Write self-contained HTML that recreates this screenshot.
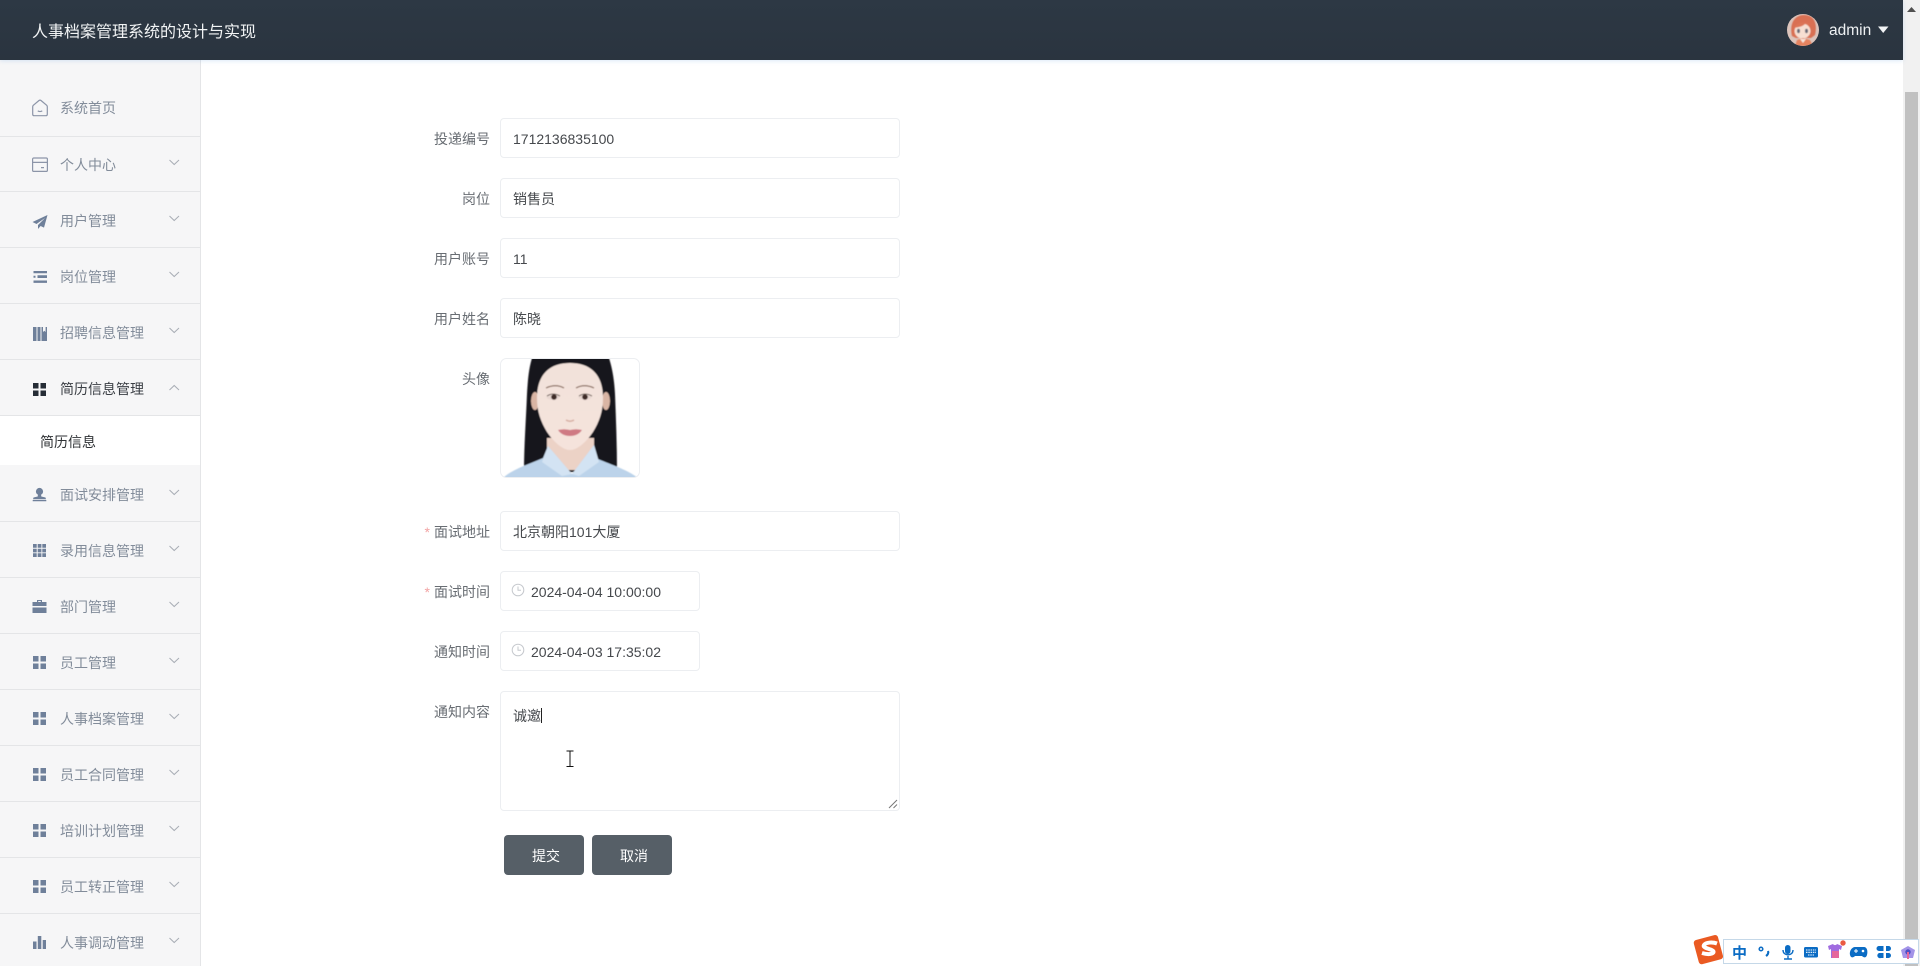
<!DOCTYPE html>
<html lang="zh-CN"><head><meta charset="utf-8"><title>人事档案管理系统的设计与实现</title>
<style>
*{box-sizing:border-box}
html,body{margin:0;width:1920px;height:966px;overflow:hidden;background:#fff;font-family:"Liberation Sans","Noto Sans CJK SC",sans-serif;font-size:14px}
.hd{position:absolute;left:0;top:0;width:1903px;height:60px;background:linear-gradient(#2d3844,#2a343f);box-shadow:0 1px 4px rgba(120,170,230,.25);z-index:3}
.title{position:absolute;left:32px;top:21px;font-size:16px;line-height:24px;color:#f2f4f5}
.admin{position:absolute;left:1829px;top:20px;font-size:15.5px;line-height:22px;color:#eef1f3}
.side{position:absolute;left:0;top:60px;width:201px;height:906px;background:#f6f6f7;border-right:1px solid #e4e5e7}
.it{position:absolute;left:0;width:200px;height:56px;border-bottom:1px solid #e4e5e7;color:#828c9a}
.it span{position:absolute;left:60px;top:18px;line-height:22px;white-space:nowrap}
.it svg.i{position:absolute;left:32px;top:18px}
.it svg.c{position:absolute;left:169px;top:23px}
.sub{position:absolute;left:0;top:415px;width:200px;height:50px;background:#fff;border-top:1px solid #e4e5e7;color:#2f3235}
.sub span{position:absolute;left:40px;top:15px;line-height:22px}
.lb{position:absolute;width:120px;left:370px;text-align:right;color:#686d73;line-height:22px;white-space:nowrap}
.lb b{color:#f2a3a3;font-weight:400;margin-right:4px}
.in{position:absolute;left:500px;width:400px;height:40px;border:1px solid #eceef1;border-radius:4px;background:#fff;color:#45484c;line-height:40px;padding-left:12px;white-space:nowrap}
.dt{width:200px;padding-left:30px}
.dt svg{position:absolute;left:10px;top:11px}
.ta{height:120px;line-height:22px;padding-top:13px}
.btn{position:absolute;top:835px;width:80px;height:40px;border-radius:4px;background:#565f67;color:#fff;text-align:center;line-height:42px;padding-left:4px}
.sb{position:absolute;left:1903px;top:0;width:17px;height:966px;background:#f1f1f1}
.th{position:absolute;left:2px;top:92px;width:13px;height:874px;background:#c1c1c1}
.ime{position:absolute;left:1723px;top:939px;width:196px;height:25px;background:#fff;border:1px solid #c5d8e8}
</style></head><body>
<div class="hd"><div class="title">人事档案管理系统的设计与实现</div>
<svg style="position:absolute;left:1787px;top:14px" width="32" height="32" viewBox="0 0 32 32"><defs><clipPath id="a"><circle cx="16" cy="16" r="16"/></clipPath><filter id="av"><feGaussianBlur stdDeviation=".45"/></filter></defs><g clip-path="url(#a)"><rect width="32" height="32" fill="#dcc4bc"/><g filter="url(#av)"><path d="M5 22C2 9 8 1 17 1s14 7 11 20l-4 3H9z" fill="#d96f52"/><ellipse cx="15.500" cy="17" rx="8" ry="7.500" fill="#f7dfd2"/><path d="M7 14c2-6 12-8 17-3-3-1-4 0-6-1-3 3-7 3-11 4z" fill="#dc7557"/><ellipse cx="11.500" cy="17" rx="1.500" ry="2.200" fill="#6a6a78"/><ellipse cx="19.500" cy="17" rx="1.500" ry="2.200" fill="#6a6a78"/><path d="M10 26l6-2 7 2 3 6H8z" fill="#e5835f"/><path d="M13 25l3 4 3-4z" fill="#f7e6dc"/></g></g></svg>
<div class="admin">admin</div>
<svg style="position:absolute;left:1878px;top:26px" width="11" height="8"><path d="M0 .5h10.500L5.200 7z" fill="#f2f4f6"/></svg></div>

<div class="side"></div>
<div class="it" style="top:81px"><svg class="i" width="16" height="18" viewBox="0 0 16 18" fill="none" stroke="#8c95a8" stroke-width="1.200"><path d="M7 1.500 1.300 6.300C.9 6.700.7 7.200.7 7.800v7.400c0 .9.700 1.500 1.500 1.500h11.600c.8 0 1.500-.6 1.500-1.500V7.800c0-.6-.2-1.100-.6-1.500L9 1.500c-.6-.5-1.400-.5-2 0z"/><path d="M5.800 11.800c.8 1 3.600 1 4.400 0"/></svg><span style="top:16px">系统首页</span></div>
<div class="it" style="top:136px"><svg class="i" width="16" height="16" viewBox="0 0 16 16" fill="none" stroke="#8c95a8" stroke-width="1.200" style="top:21px"><rect x=".6" y="1" width="14.800" height="13.400" rx="1.200"/><path d="M.6 5.400h14.800M9 10.600h3"/></svg><span>个人中心</span><svg class="c" width="11" height="7"><path d="M.5 1 5.200 5.500 10 1" fill="none" stroke="#a8adb5"/></svg></div>
<div class="it" style="top:192px"><svg class="i" width="16" height="16" viewBox="0 0 16 16" style="top:22px"><path d="M15.500 1 .5 8l4 2L13 4 6 11v4l2.600-3 3.400 1.600z" fill="#6f809a"/></svg><span>用户管理</span><svg class="c" width="11" height="7"><path d="M.5 1 5.200 5.500 10 1" fill="none" stroke="#a8adb5"/></svg></div>
<div class="it" style="top:248px"><svg class="i" width="16" height="14" viewBox="0 0 16 14" style="top:23px"><path d="M1.500 0h13.500v2.200H1.500zM1.500 4.800h2v2h-2zM5.500 4.300H15v2.700H5.500zM1.500 9.500h13.500v2.400H1.500z" fill="#6f809a"/></svg><span>岗位管理</span><svg class="c" width="11" height="7"><path d="M.5 1 5.200 5.500 10 1" fill="none" stroke="#a8adb5"/></svg></div>
<div class="it" style="top:304px"><svg class="i" width="16" height="16" viewBox="0 0 16 16" style="top:22px"><path d="M1 1h3.500v14H1zM5.500 1H8.500v14h-3zM9.500 1h1.500v5l1.300-1.300L13.600 6V1H15v14H9.500z" fill="#6f809a"/></svg><span>招聘信息管理</span><svg class="c" width="11" height="7"><path d="M.5 1 5.200 5.500 10 1" fill="none" stroke="#a8adb5"/></svg></div>
<div class="it" style="top:360px"><svg class="i" width="15" height="15" style="top:22px"><path d="M1 1h5.500v5.500H1zM8.500 1H14v5.500H8.500zM1 8.500h5.500V14H1zM8.500 8.500H14V14H8.500z" fill="#252c35"/></svg><span style="color:#3a3e44">简历信息管理</span><svg class="c" style="top:24px" width="11" height="7"><path d="M.5 6 5.200 1.500 10 6" fill="none" stroke="#a8adb5"/></svg></div>
<div class="sub"><span>简历信息</span></div>
<div class="it" style="top:466px"><svg class="i" width="15" height="15" style="top:21px"><circle cx="7.500" cy="4.500" r="3.600" fill="#6f809a"/><path d="M6 7h3l.3 2.500L13.500 10.500l.5 1.800H1l.5-1.800 4.200-1zM.7 13h13.600v1.300H.7z" fill="#6f809a"/></svg><span>面试安排管理</span><svg class="c" width="11" height="7"><path d="M.5 1 5.200 5.500 10 1" fill="none" stroke="#a8adb5"/></svg></div>
<div class="it" style="top:522px"><svg class="i" width="15" height="15" style="top:21px"><path d="M1 1h3.700v3.700H1zM5.700 1h3.700v3.700H5.700zM10.300 1H14v3.700h-3.700zM1 5.700h3.700v3.700H1zM5.700 5.700h3.700v3.700H5.700zM10.300 5.700H14v3.700h-3.700zM1 10.300h3.700V14H1zM5.700 10.300h3.700V14H5.700zM10.300 10.300H14V14h-3.700z" fill="#6f809a"/></svg><span>录用信息管理</span><svg class="c" width="11" height="7"><path d="M.5 1 5.200 5.500 10 1" fill="none" stroke="#a8adb5"/></svg></div>
<div class="it" style="top:578px"><svg class="i" width="15" height="15" style="top:21px"><path d="M5 3V1h5v2h4.500v4H.5V3zM6.200 3h2.600V2H6.200zM.5 8.500h14V14H.5z" fill="#6f809a"/></svg><span>部门管理</span><svg class="c" width="11" height="7"><path d="M.5 1 5.200 5.500 10 1" fill="none" stroke="#a8adb5"/></svg></div>
<div class="it" style="top:634px"><svg class="i" width="15" height="15" style="top:21px"><path d="M1 1h5.500v5.500H1zM8.500 1H14v5.500H8.500zM1 8.500h5.500V14H1zM8.500 8.500H14V14H8.500z" fill="#6f809a"/></svg><span>员工管理</span><svg class="c" width="11" height="7"><path d="M.5 1 5.200 5.500 10 1" fill="none" stroke="#a8adb5"/></svg></div>
<div class="it" style="top:690px"><svg class="i" width="15" height="15" style="top:21px"><path d="M1 1h5.500v5.500H1zM8.500 1H14v5.500H8.500zM1 8.500h5.500V14H1zM8.500 8.500H14V14H8.500z" fill="#6f809a"/></svg><span>人事档案管理</span><svg class="c" width="11" height="7"><path d="M.5 1 5.200 5.500 10 1" fill="none" stroke="#a8adb5"/></svg></div>
<div class="it" style="top:746px"><svg class="i" width="15" height="15" style="top:21px"><path d="M1 1h5.500v5.500H1zM8.500 1H14v5.500H8.500zM1 8.500h5.500V14H1zM8.500 8.500H14V14H8.500z" fill="#6f809a"/></svg><span>员工合同管理</span><svg class="c" width="11" height="7"><path d="M.5 1 5.200 5.500 10 1" fill="none" stroke="#a8adb5"/></svg></div>
<div class="it" style="top:802px"><svg class="i" width="15" height="15" style="top:21px"><path d="M1 1h5.500v5.500H1zM8.500 1H14v5.500H8.500zM1 8.500h5.500V14H1zM8.500 8.500H14V14H8.500z" fill="#6f809a"/></svg><span>培训计划管理</span><svg class="c" width="11" height="7"><path d="M.5 1 5.200 5.500 10 1" fill="none" stroke="#a8adb5"/></svg></div>
<div class="it" style="top:858px"><svg class="i" width="15" height="15" style="top:21px"><path d="M1 1h5.500v5.500H1zM8.500 1H14v5.500H8.500zM1 8.500h5.500V14H1zM8.500 8.500H14V14H8.500z" fill="#6f809a"/></svg><span>员工转正管理</span><svg class="c" width="11" height="7"><path d="M.5 1 5.200 5.500 10 1" fill="none" stroke="#a8adb5"/></svg></div>
<div class="it" style="top:914px;border:0"><svg class="i" width="15" height="15" style="top:21px"><path d="M1 6.500h3.500V14H1zM5.800 1h3.500v13H5.800zM10.700 5H14v9h-3.300z" fill="#6f809a"/></svg><span>人事调动管理</span><svg class="c" width="11" height="7"><path d="M.5 1 5.200 5.500 10 1" fill="none" stroke="#a8adb5"/></svg></div>

<div class="lb" style="top:128px">投递编号</div><div class="in" style="top:118px">1712136835100</div>
<div class="lb" style="top:188px">岗位</div><div class="in" style="top:178px">销售员</div>
<div class="lb" style="top:248px">用户账号</div><div class="in" style="top:238px">11</div>
<div class="lb" style="top:308px">用户姓名</div><div class="in" style="top:298px">陈晓</div>
<div class="lb" style="top:368px">头像</div>
<svg style="position:absolute;left:500px;top:358px" width="140" height="120" viewBox="0 0 140 120">
<defs><filter id="b" x="-5%" y="-5%" width="110%" height="110%"><feGaussianBlur stdDeviation=".9"/></filter><filter id="b2"><feGaussianBlur stdDeviation=".5"/></filter><clipPath id="r"><rect x=".5" y=".5" width="139" height="119" rx="6"/></clipPath><linearGradient id="sk" x1="0" y1="0" x2="0" y2="1"><stop offset="0" stop-color="#f2e2da"/><stop offset="1" stop-color="#f5e3dc"/></linearGradient></defs>
<g clip-path="url(#r)"><rect width="140" height="120" fill="#fff"/><g filter="url(#b2)">
<path d="M33 -3h75c4 12 6 22 7 39 1 26 2 52 2 78H24c0-26 2-52 3-78 1-17 2-27 6-39z" fill="#17141a"/>
<path d="M47 80h47v32H47z" fill="#ecd2c6"/>
<ellipse cx="35" cy="43" rx="4" ry="9" fill="#d9b5a4"/><ellipse cx="106" cy="43" rx="4" ry="9" fill="#d9b5a4"/>
<path d="M70 5c22 0 33 13 33 35 0 14-4 24-10 34-6 9-15 18-23 18s-17-9-23-18c-6-10-10-20-10-34C37 18 48 5 70 5z" fill="url(#sk)"/>
<path d="M46 30c6-3 13-3 18 0M76 30c5-3 12-3 18 0" stroke="#8a6d60" stroke-width="1.200" fill="none"/>
<ellipse cx="53" cy="39" rx="6.500" ry="2.800" fill="#e8d8d2"/><ellipse cx="85" cy="39" rx="6.500" ry="2.800" fill="#e8d8d2"/>
<circle cx="54" cy="39" r="2.800" fill="#3c2a25"/><circle cx="85" cy="39" r="2.800" fill="#3c2a25"/>
<path d="M47 38q6-4 13 0M79 38q6-4 13 0" stroke="#4b3a33" stroke-width=".8" fill="none"/>
<path d="M66 62q4 2.500 8 0" stroke="#d6ada0" stroke-width="1.500" fill="none"/>
<path d="M58 72q6-1.500 12 0 6-1.500 12 0-4 6-12 6t-12-6z" fill="#cf7a83"/>
<path d="M3 120c8-8 26-14 40-20l5-12 24 28 22-29 4 14c14 6 30 11 40 19z" fill="#bcd3ea"/>
<path d="M48 88 42 104l20 14 10-2zM94 87l5 17-20 14-7-2z" fill="#d3e3f3"/></g></g>
<rect x=".5" y=".5" width="139" height="119" rx="6" fill="none" stroke="#eceef1"/></svg>
<div class="lb" style="top:521px"><b>*</b>面试地址</div><div class="in" style="top:511px">北京朝阳101大厦</div>
<div class="lb" style="top:581px"><b>*</b>面试时间</div><div class="in dt" style="top:571px"><svg width="14" height="14" fill="none" stroke="#c6c9ce"><circle cx="7" cy="7" r="5.800"/><path d="M7 3.500V7.300h3"/></svg>2024-04-04 10:00:00</div>
<div class="lb" style="top:641px">通知时间</div><div class="in dt" style="top:631px"><svg width="14" height="14" fill="none" stroke="#c6c9ce"><circle cx="7" cy="7" r="5.800"/><path d="M7 3.500V7.300h3"/></svg>2024-04-03 17:35:02</div>
<div class="lb" style="top:701px">通知内容</div>
<div class="in ta" style="top:691px">诚邀<span style="display:inline-block;width:1px;height:15px;background:#222;vertical-align:-2px"></span>
<svg style="position:absolute;left:auto;right:1px;top:auto;bottom:1px" width="10" height="10" fill="none" stroke="#777"><path d="M1 9 9 1M5.500 9 9 5.500"/></svg></div>
<svg style="position:absolute;left:566px;top:750px" width="8" height="18" fill="none" stroke="#111"><path d="M.5 1h7M.5 16.500h7M4 1v15.500"/></svg>
<div class="btn" style="left:504px">提交</div><div class="btn" style="left:592px">取消</div>

<div class="sb"><svg style="position:absolute;left:4px;top:7px" width="9" height="5"><path d="M4.500 0 9 5H0z" fill="#505050"/></svg><div class="th"></div></div>

<div class="ime"></div>
<svg style="position:absolute;left:1692px;top:933px" width="228" height="33" viewBox="0 0 228 33" font-family="Liberation Sans,Noto Sans CJK SC,sans-serif">
<rect x="4" y="4" width="25" height="25" rx="3" transform="rotate(-15 17 17)" fill="#ea5a22"/>
<path d="M25 10.500c-4-1.500-11-1.500-13 1.500-2 3.500 9 4 9.500 6.500.5 2.500-5 3.500-11.500 1.500" stroke="#fff" stroke-width="4" fill="none"/>
<text x="40" y="25" font-size="15" font-weight="700" fill="#0b6cc4">中</text>
<circle cx="69" cy="16" r="1.800" fill="none" stroke="#0b6cc4" stroke-width="1.500"/><path d="M76 18c.8 2-.5 4-2 5" stroke="#0b6cc4" stroke-width="2.200" fill="none"/>
<rect x="93" y="12" width="5.500" height="9" rx="2.700" fill="#0b6cc4"/><path d="M91 17c0 6.500 10 6.500 10 0M96 23v3M92 26h8" stroke="#0b6cc4" stroke-width="1.400" fill="none"/>
<rect x="112" y="14" width="14" height="10.500" rx="1.500" fill="#0b6cc4"/><path d="M114 17h10M114 19.300h10M116 22h6" stroke="#fff" stroke-width="1.100" stroke-dasharray="1.500 .8"/>
<path d="M136 13l5-2c1 1.500 3 1.500 4 0l5 2-1 4-2-1v9h-8v-9l-2 1z" fill="#a06ce0"/><path d="M140 18h7v7h-7z" fill="#e5679c"/><circle cx="151" cy="10" r="2.700" fill="#ea5a42"/>
<path d="M163 14h9c3 0 4 4 3 8-1 3-3 3-5 1h-7c-2 2-4 2-5-1-1-4 2-8 5-8z" fill="#0b6cc4"/><circle cx="171" cy="18" r="1.300" fill="#fff"/><path d="M162 18h4M164 16v4" stroke="#fff"/>
<path d="M187 13h4.500v5h-4.500a2.500 2.500 0 0 1 0-5zM194 13h2.500a2.500 2.500 0 0 1 0 5H194zM187 20h4.500v5h-2.500a2.500 2.500 0 0 1-2-5zM194 20h2.500a2.500 2.500 0 0 1 0 5H194z" fill="#0b6cc4"/>
<path d="M216 13l7 4-2 8h-10l-2-8z" fill="#a394e8"/><circle cx="216" cy="19" r="2.700" fill="#4f4fc4"/><path d="M216 19v7" stroke="#e5679c" stroke-width="2"/>
</svg>
</body></html>
